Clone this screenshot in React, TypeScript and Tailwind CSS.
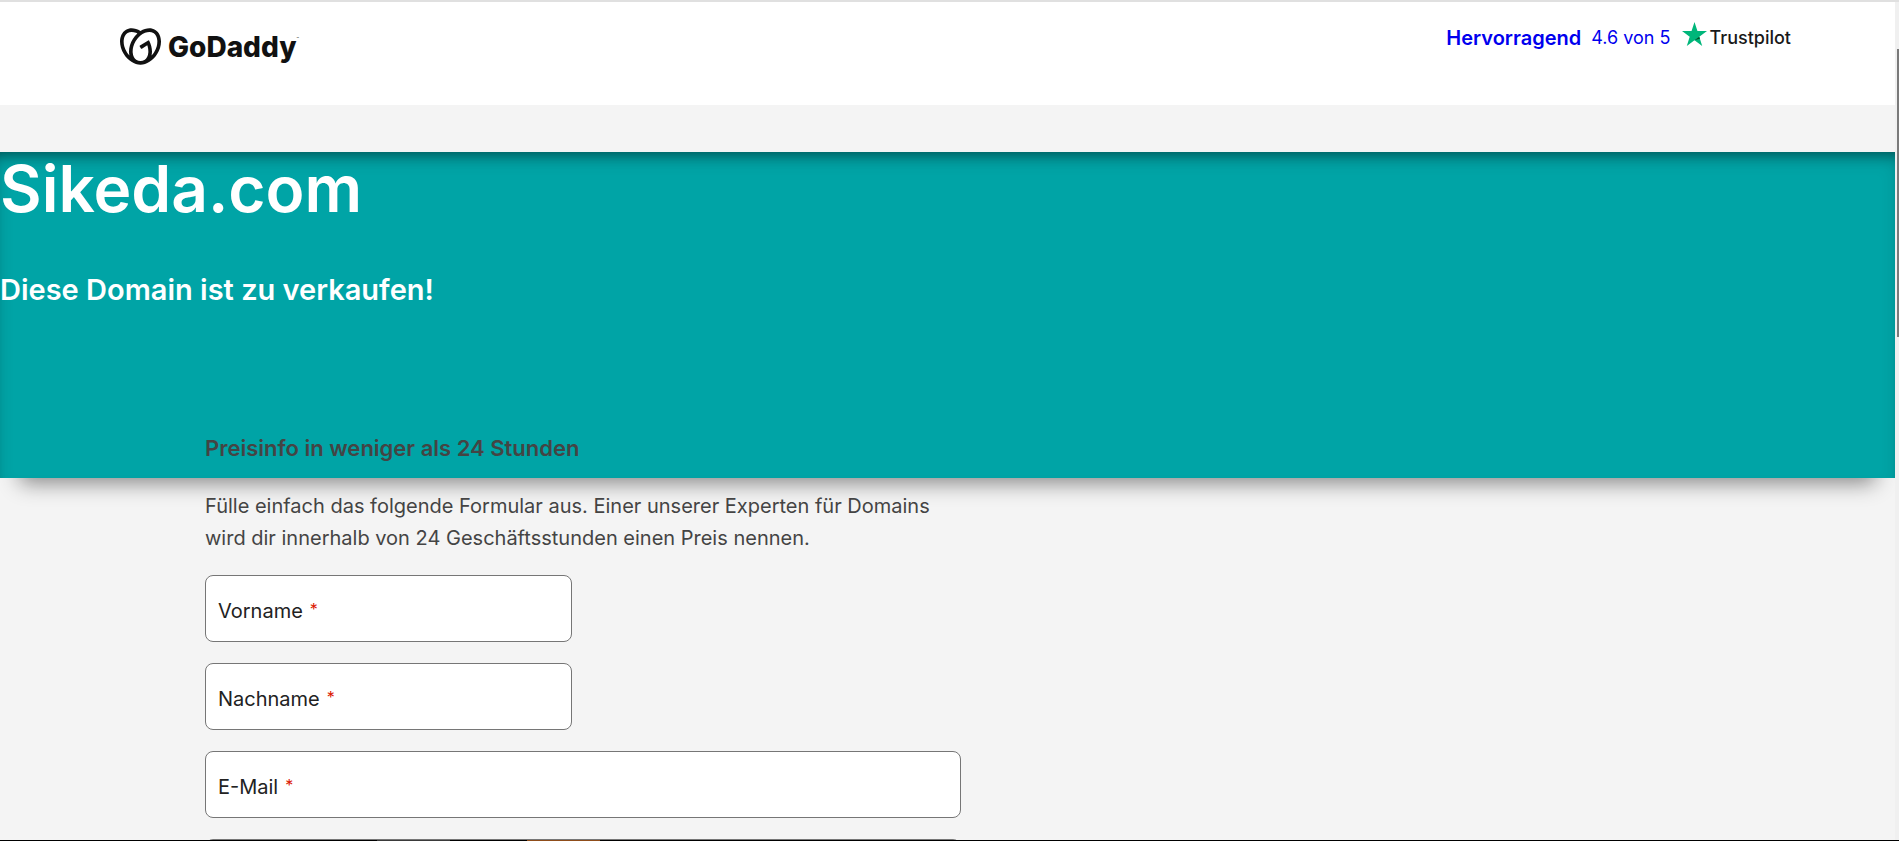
import { SiGodaddy } from "react-icons/si";

const fields = [
  { id: "vorname", label: "Vorname", type: "text", width: "max-w-[367px]" },
  { id: "nachname", label: "Nachname", type: "text", width: "max-w-[367px]" },
  { id: "email", label: "E-Mail", type: "email", width: "max-w-[756px]" },
];

function Logo() {
  return (
    <a href="#" className="flex items-center gap-[7px] text-[#111]" aria-label="GoDaddy">
      <SiGodaddy className="size-[41px]" />
      <span className="flex items-start">
        <span className="text-[28px] leading-9 font-extrabold">GoDaddy</span>
        <span className="pt-1 text-[4px] leading-3">™</span>
      </span>
    </a>
  );
}

function Trustpilot() {
  return (
    <a href="#" className="flex items-center text-[20px] leading-6 text-[#0000ee]">
      <span className="font-semibold">Hervorragend</span>
      <span className="ml-[10px] text-[18px]">4.6 von 5</span>
      <span className="ml-3 flex items-center gap-0.5 text-[18px] font-medium text-[#191919]">
        <svg viewBox="0 0 25 24" className="mb-2 h-6 w-[25px]" aria-hidden="true">
          <path fill="#00b67a" d="M12.5 0l2.95 9.1H25l-7.7 5.6L20.2 24l-7.7-5.7L4.8 24l2.9-9.3L0 9.1h9.55z" />
          <path fill="#005128" d="M17.96 16.75l-.66-2.05-4.8 3.6z" />
        </svg>
        Trustpilot
      </span>
    </a>
  );
}

export default function App() {
  return (
    <div className="flex h-screen flex-col overflow-hidden bg-black font-['Inter',sans-serif]">
      <div className="h-0.5 shrink-0 bg-[#e0e0e0]" />
      <div className="flex min-h-0 flex-1">
        <div className="min-w-0 flex-1 overflow-hidden bg-[#f4f4f4]">
          <header className="flex h-[103px] items-start justify-between bg-white pr-[104px] pl-[120px]">
            <div className="pt-6">
              <Logo />
            </div>
            <div className="pt-5">
              <Trustpilot />
            </div>
          </header>

          <section className="mt-[47px] flex h-[326px] flex-col bg-[#00a4a6] text-white shadow-[0_25px_20px_-20px_rgba(0,0,0,0.45),inset_0_12px_14px_-10px_rgba(0,0,0,0.4),inset_0_10px_20px_-6px_rgba(0,0,0,0.2)]">
            <h1 className="text-[64px] leading-[74px] font-semibold">Sikeda.com</h1>
            <h2 className="mt-[46px] text-[29px] leading-9 font-semibold">Diese Domain ist zu verkaufen!</h2>
            <h3 className="mt-auto mb-4 pl-[205px] text-[22px] leading-7 font-semibold text-[#444]">
              Preisinfo in weniger als 24 Stunden
            </h3>
          </section>

          <main className="pt-3 pl-[205px]">
            <p className="max-w-[756px] text-[20px] leading-8 text-[#444]">
              Fülle einfach das folgende Formular aus. Einer unserer Experten für Domains wird dir innerhalb von 24
              Geschäftsstunden einen Preis nennen.
            </p>
            <form className="mt-[21px] flex flex-col gap-[21px]">
              {fields.map((f) => (
                <div
                  key={f.id}
                  className={`flex h-[67px] items-center rounded-lg border border-[#767676] bg-white px-3 ${f.width}`}
                >
                  <label htmlFor={f.id} className="flex items-start gap-[7px] pt-1 text-[20px] leading-6 text-[#222]">
                    {f.label}
                    <span className="text-[16px] leading-5 text-[#db1802]">*</span>
                  </label>
                  <input id={f.id} type={f.type} required className="min-w-0 flex-1 outline-none" />
                </div>
              ))}
              <textarea
                aria-label="Nachricht"
                className="h-[132px] max-w-[756px] resize-none rounded-lg border border-[#767676] bg-white"
              />
            </form>
          </main>
        </div>

        {/* scroll track */}
        <div className="w-1 shrink-0 bg-[#f0f0f0] pt-[47px] pl-0.5">
          <div className="h-[288px] bg-[#7a7a7a]" />
        </div>
      </div>
      <div className="flex h-px shrink-0 bg-black pl-[377px]">
        <div className="w-[73px] bg-[#3a3a3a]" />
        <div className="ml-[77px] w-[73px] bg-[#8f4d1a]" />
      </div>
    </div>
  );
}
